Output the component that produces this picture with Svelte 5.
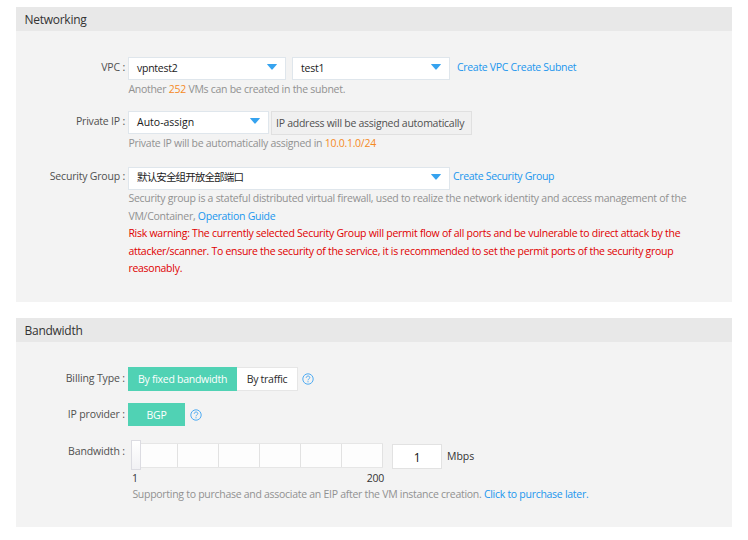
<script>
  const ticks = [0, 1, 2, 3, 4, 5];
</script>

{#snippet arrow()}
  <svg class="arrow" width="10" height="6" viewBox="0 0 10 6"><path d="M0 .3Q0 0 .5 0h9q.5 0 .5.3L5.7 5.3Q5 6 4.3 5.3Z" fill="#36a3ef" /></svg>
{/snippet}

{#snippet help()}
  <svg class="help" width="12" height="12" viewBox="0 0 12 12" fill="none" stroke="#4fabf2">
    <circle cx="6" cy="6" r="5.2" />
    <path d="M4.2 4.8C4.2 2.4 7.8 2.5 7.8 4.6C7.8 5.8 6 5.9 6 7.3M6 8.2v1.1" />
  </svg>
{/snippet}

<main>
  <section class="net">
    <h2>Networking</h2>
    <div class="row vpc">
      <label for="vpc">VPC :</label>
      <div class="field">
        <div class="line">
          <button id="vpc" class="select w158"><span>vpntest2</span>{@render arrow()}</button>
          <button class="select w158 second"><span>test1</span>{@render arrow()}</button>
          <a class="t-create"><span>Create VPC Create Subnet</span></a>
        </div>
        <p class="t-another">Another <em>252</em> VMs can be created in the subnet.</p>
      </div>
    </div>
    <div class="row ip">
      <label for="ip">Private IP :</label>
      <div class="field">
        <div class="line">
          <button id="ip" class="select w140"><span class="auto">Auto-assign</span>{@render arrow()}</button>
          <div class="info">IP address will be assigned automatically</div>
        </div>
        <p class="t-private">Private IP will be automatically assigned in <em>10.0.1.0/24</em></p>
      </div>
    </div>
    <div class="row sg">
      <label for="sg">Security Group :</label>
      <div class="field">
        <div class="line">
          <button id="sg" class="select w322"><span class="cjk">默认安全组开放全部端口</span>{@render arrow()}</button>
          <a class="t-group">Create Security Group</a>
        </div>
        <p class="t-d1">Security group is a stateful distributed virtual firewall, used to realize the network identity and access management of the</p>
        <p class="t-d2">VM/Container, <a>Operation Guide</a></p>
        <p class="risk t-r1">Risk warning: The currently selected Security Group will permit flow of all ports and be vulnerable to direct attack by the</p>
        <p class="risk t-r2">attacker/scanner. To ensure the security of the service, it is recommended to set the permit ports of the security group</p>
        <p class="risk t-r3">reasonably.</p>
      </div>
    </div>
  </section>

  <section class="bw">
    <h2>Bandwidth</h2>
    <div class="row billing">
      <span class="label">Billing Type :</span>
      <div class="line">
        <button class="opt on fixed">By fixed bandwidth</button>
        <button class="opt traffic">By traffic</button>
        {@render help()}
      </div>
    </div>
    <div class="row provider">
      <span class="label">IP provider :</span>
      <div class="line">
        <button class="opt on bgp">BGP</button>
        {@render help()}
      </div>
    </div>
    <div class="row speed">
      <span class="label">Bandwidth :</span>
      <div class="field">
        <div class="line slider">
          <div class="handle"></div>
          <div class="track">{#each ticks as t (t)}<i></i>{/each}</div>
          <div class="num">1</div>
          <span class="unit">Mbps</span>
        </div>
        <div class="scale"><span>1</span><span>200</span></div>
        <p class="t-support">Supporting to purchase and associate an EIP after the VM instance creation. <a>Click to purchase later.</a></p>
      </div>
    </div>
  </section>
</main>

<style>
  :global(body) { background: #fff; }
  main {
    box-sizing: border-box;
    width: 748px;
    height: 540px;
    padding: 7px 16px 0;
    font: 10.5px/18px "Open Sans", "Noto Sans", "Noto Sans CJK SC", sans-serif;
    letter-spacing: -0.27px;
    color: #333;
    overflow: hidden;
  }
  section { background: #f3f3f3; }
  .net { height: 295px; }
  .bw { height: 209px; margin-top: 16px; }
  h2 {
    margin: 0;
    height: 24px;
    padding-left: 8.5px;
    background: #e8e8e8;
    font-size: 12px;
    font-weight: 400;
    line-height: 25px;
    color: #333;
  }
  .row { display: flex; gap: 3px; }
  label, .label {
    width: 109px;
    flex: none;
    text-align: right;
    color: #505050;
    line-height: 20px;
    letter-spacing: -0.2px;
    white-space: nowrap;
  }
  .field { display: flex; flex-direction: column; }
  .line { display: flex; align-items: center; }
  p { margin: 0; color: #919191; white-space: nowrap; line-height: 18px; padding-left: 0.4px; }
  em { font-style: normal; color: #f58a1f; }
  a { color: #2196ee; white-space: nowrap; }
  button { font: inherit; letter-spacing: inherit; margin: 0; padding: 0; border: 0; border-radius: 0; }
  .select {
    box-sizing: border-box;
    display: flex;
    align-items: center;
    justify-content: space-between;
    height: 23px;
    padding: 0 8px;
    border: 1px solid #dfe6ec;
    background: #fff;
    color: #1a1a1a;
    letter-spacing: -0.25px;
    white-space: nowrap;
  }
  .vpc .select span { margin-bottom: 2px; }
  .select .auto { letter-spacing: 0; margin-bottom: 1px; }
  .select .cjk { letter-spacing: -0.86px; margin-bottom: 3px; }
  .arrow { margin-bottom: 3px; }
  .w158 { width: 158px; }
  .w140 { width: 141px; }
  .w322 { width: 322px; }
  .second { margin-left: 6px; }
  .info {
    box-sizing: border-box;
    width: 201px;
    height: 24px;
    margin-left: 2px;
    padding-left: 4px;
    border: 1px solid #e0e0e0;
    background: #f0f0f0;
    color: #505050;
    line-height: 22px;
    letter-spacing: -0.26px;
    white-space: nowrap;
  }
  .vpc { padding-top: 26px; height: 54px; }
  .ip { height: 56px; }
  .sg label { line-height: 19px; }
  .vpc .line, .ip .line, .sg .line { height: 23px; }
  .t-create { margin-left: 7px; margin-top: -3px; letter-spacing: -0.31px; }
  .t-group { margin-left: 3px; margin-top: -5px; letter-spacing: -0.32px; }
  .sg .t-r1 { letter-spacing: -0.26px; }
  .sg .t-r2 { letter-spacing: -0.285px; }
  .sg p { line-height: 17.6px; }
  .sg .risk { color: #e00000; }

  .billing { padding-top: 25px; height: 36px; }
  .provider { height: 37px; }
  .bw .label { line-height: 22px; letter-spacing: -0.13px; }
  .billing .line { height: 24px; }
  .provider .line { height: 23px; }
  .opt {
    box-sizing: border-box;
    height: 100%;
    background: #fff;
    color: #2a2a2a;
    white-space: nowrap;
  }
  .opt.on { background: #50d2b4; color: #fff; }
  .fixed { width: 109px; }
  .traffic { width: 61px; border: 1px solid #e6e6e6; border-left: 0; }
  .bgp { width: 57px; }
  .help { margin-left: 4px; }
  .provider .help { margin-left: 4.5px; margin-top: 1px; }
  .slider { height: 30px; padding-left: 3px; }
  .handle {
    box-sizing: border-box;
    width: 10px;
    height: 30px;
    border: 1px solid #dcdce2;
    background: linear-gradient(#fff, #f1f1f4);
  }
  .track {
    box-sizing: border-box;
    display: flex;
    width: 242px;
    height: 25px;
    border: solid #e6e6e6;
    border-width: 1px 0;
    background: #fdfdfd;
  }
  .track i { box-sizing: border-box; width: 41px; border-right: 1px solid #e2e2e2; }
  .track i:first-child { width: 37px; }
  .num {
    box-sizing: border-box;
    width: 50px;
    height: 25px;
    margin: 2px 0 0 9px;
    border: 1px solid #e2e2e2;
    background: #fff;
    color: #111;
    font-size: 12px;
    text-align: center;
    line-height: 25px;
  }
  .unit { margin-left: 5px; margin-top: 2px; letter-spacing: 0; }
  .scale { display: flex; justify-content: space-between; width: 252px; padding-left: 4px; height: 16px; line-height: 16px; }
  .t-support { padding-left: 4.4px; line-height: 17px; letter-spacing: -0.28px; }
</style>
